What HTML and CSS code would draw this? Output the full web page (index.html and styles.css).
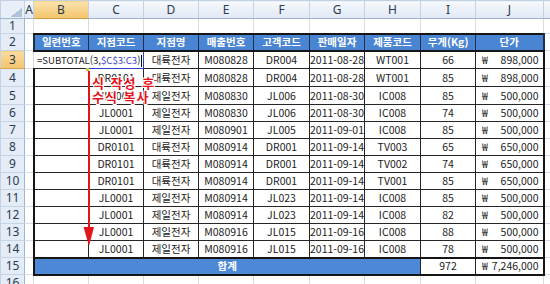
FILE: index.html
```html
<!DOCTYPE html>
<html lang="ko">
<head>
<meta charset="utf-8">
<link rel="stylesheet" href="styles.css">
</head>
<body>
<div class="sheet">
<table class="grid">
<colgroup>
<col class="w24"><col class="w9"><col class="w55"><col class="w55"><col class="w55"><col class="w55"><col class="w56"><col class="w55"><col class="w56"><col class="w55"><col class="w68"><col class="w7">
</colgroup>
<thead>
<tr class="colhead h18"><th class="corner"></th><th>A</th><th class="sel">B</th><th>C</th><th>D</th><th>E</th><th>F</th><th>G</th><th>H</th><th>I</th><th>J</th><th></th></tr>
</thead>
<tbody>
<tr class="h15"><th class="rh">1</th><td></td><td></td><td></td><td></td><td></td><td></td><td></td><td></td><td></td><td></td><td></td></tr>
<tr class="h17 hdr"><th class="rh">2</th><td></td><td class="t tl">일련번호</td><td class="t">지점코드</td><td class="t">지점명</td><td class="t">매출번호</td><td class="t">고객코드</td><td class="t">판매일자</td><td class="t">제품코드</td><td class="t">무게(Kg)</td><td class="t tr">단가</td><td></td></tr>
<tr class="h18"><th class="rh sel">3</th><td></td><td class="edit">=SUBTOTAL(3,<span class="ref">$C$3:C3</span>)<span class="caret"></span></td><td class="t refbox"></td><td class="t">대륙전자</td><td class="t">M080828</td><td class="t">DR004</td><td class="t">2011-08-28</td><td class="t">WT001</td><td class="t">66</td><td class="t tr"><div class="acct"><span>₩</span><span>898,000</span></div></td><td></td></tr>
<tr class="h18"><th class="rh">4</th><td></td><td class="t tl"></td><td class="t">DR0101</td><td class="t">대륙전자</td><td class="t">M080828</td><td class="t">DR004</td><td class="t">2011-08-28</td><td class="t">WT001</td><td class="t">85</td><td class="t tr"><div class="acct"><span>₩</span><span>898,000</span></div></td><td></td></tr>
<tr class="h18"><th class="rh">5</th><td></td><td class="t tl"></td><td class="t">JL0001</td><td class="t">제일전자</td><td class="t">M080830</td><td class="t">JL006</td><td class="t">2011-08-30</td><td class="t">IC008</td><td class="t">85</td><td class="t tr"><div class="acct"><span>₩</span><span>500,000</span></div></td><td></td></tr>
<tr class="h17"><th class="rh">6</th><td></td><td class="t tl"></td><td class="t">JL0001</td><td class="t">제일전자</td><td class="t">M080830</td><td class="t">JL006</td><td class="t">2011-08-30</td><td class="t">IC008</td><td class="t">74</td><td class="t tr"><div class="acct"><span>₩</span><span>500,000</span></div></td><td></td></tr>
<tr class="h17"><th class="rh">7</th><td></td><td class="t tl"></td><td class="t">JL0001</td><td class="t">제일전자</td><td class="t">M080901</td><td class="t">JL005</td><td class="t">2011-09-01</td><td class="t">IC008</td><td class="t">85</td><td class="t tr"><div class="acct"><span>₩</span><span>500,000</span></div></td><td></td></tr>
<tr class="h17"><th class="rh">8</th><td></td><td class="t tl"></td><td class="t">DR0101</td><td class="t">대륙전자</td><td class="t">M080914</td><td class="t">DR001</td><td class="t">2011-09-14</td><td class="t">TV003</td><td class="t">65</td><td class="t tr"><div class="acct"><span>₩</span><span>650,000</span></div></td><td></td></tr>
<tr class="h17"><th class="rh">9</th><td></td><td class="t tl"></td><td class="t">DR0101</td><td class="t">대륙전자</td><td class="t">M080914</td><td class="t">DR001</td><td class="t">2011-09-14</td><td class="t">TV002</td><td class="t">74</td><td class="t tr"><div class="acct"><span>₩</span><span>650,000</span></div></td><td></td></tr>
<tr class="h17"><th class="rh">10</th><td></td><td class="t tl"></td><td class="t">DR0101</td><td class="t">대륙전자</td><td class="t">M080914</td><td class="t">DR001</td><td class="t">2011-09-14</td><td class="t">TV001</td><td class="t">85</td><td class="t tr"><div class="acct"><span>₩</span><span>650,000</span></div></td><td></td></tr>
<tr class="h17"><th class="rh">11</th><td></td><td class="t tl"></td><td class="t">JL0001</td><td class="t">제일전자</td><td class="t">M080914</td><td class="t">JL023</td><td class="t">2011-09-14</td><td class="t">IC008</td><td class="t">85</td><td class="t tr"><div class="acct"><span>₩</span><span>500,000</span></div></td><td></td></tr>
<tr class="h17"><th class="rh">12</th><td></td><td class="t tl"></td><td class="t">JL0001</td><td class="t">제일전자</td><td class="t">M080914</td><td class="t">JL023</td><td class="t">2011-09-14</td><td class="t">IC008</td><td class="t">82</td><td class="t tr"><div class="acct"><span>₩</span><span>500,000</span></div></td><td></td></tr>
<tr class="h17"><th class="rh">13</th><td></td><td class="t tl"></td><td class="t">JL0001</td><td class="t">제일전자</td><td class="t">M080916</td><td class="t">JL015</td><td class="t">2011-09-16</td><td class="t">IC008</td><td class="t">88</td><td class="t tr"><div class="acct"><span>₩</span><span>500,000</span></div></td><td></td></tr>
<tr class="h17"><th class="rh">14</th><td></td><td class="t tl"></td><td class="t">JL0001</td><td class="t">제일전자</td><td class="t">M080916</td><td class="t">JL015</td><td class="t">2011-09-16</td><td class="t">IC008</td><td class="t">78</td><td class="t tr"><div class="acct"><span>₩</span><span>500,000</span></div></td><td></td></tr>
<tr class="h17 tot"><th class="rh">15</th><td></td><td class="t tl sum" colspan="7">합계</td><td class="t">972</td><td class="t tr"><div class="acct"><span>₩</span><span>7,246,000</span></div></td><td></td></tr>
<tr class="h17"><th class="rh">16</th><td></td><td></td><td></td><td></td><td></td><td></td><td></td><td></td><td></td><td></td><td></td></tr>
</tbody>
</table>
<svg class="arrow" width="550" height="284" viewBox="0 0 550 284">
<rect x="86" y="68" width="3" height="3" fill="#c9c83a"/>
<rect x="88" y="71" width="2" height="160" fill="#e3141b"/>
<polygon points="83.5,227 94,227 89,246" fill="#e3141b"/>
</svg>
<div class="note"><div>식 작성 후</div><div>수식 복사</div></div>
</div>
</body>
</html>
```

FILE: styles.css
```css
* { box-sizing: border-box; }
html, body { margin: 0; padding: 0; background: #fff; }
body { width: 550px; height: 284px; overflow: hidden; font-family: "Noto Sans CJK KR", "Noto Sans", sans-serif; }

.sheet { position: relative; width: 550px; height: 284px; overflow: hidden; }

.grid { border-collapse: collapse; table-layout: fixed; width: 550px; font-size: 10.5px; line-height: 14px; color: #1c1c1c; }
.grid td, .grid th { padding: 0; border: 1px solid #d5dbe6; white-space: nowrap; overflow: hidden; text-align: center; vertical-align: middle; font-weight: normal; }

.w24 { width: 24px; }
.w9 { width: 9px; }
.w55 { width: 55px; }
.w56 { width: 56px; }
.w68 { width: 68px; }
.w7 { width: 7px; }

.h18 { height: 18px; }
.h17 { height: 17px; }
.h15 { height: 15px; }

.colhead th { background: linear-gradient(#f6f9fd, #dfe8f4); border-color: #c4d1e2; border-bottom: 1px solid #9eb6ce; color: #2b3a4e; font-family: "Noto Sans", sans-serif; font-size: 12px; }
.colhead th.sel { background: linear-gradient(#fbe3ae, #f3c36a); border-bottom-color: #cf9d45; }
.colhead th.corner { background: #e9eff8 linear-gradient(to bottom right, transparent 50%, #aec2da 50%) no-repeat right 2px bottom 1px / 12px 9px; }

.grid th.rh { background: #e4ecf7; border-color: #c5d3e5; border-right: 1px solid #9eb6ce; color: #2b3a4e; font-family: "Noto Sans", sans-serif; font-size: 12px; }
.grid th.rh.sel { background: linear-gradient(#fadca2, #f3c46b); border-bottom-color: #d9a650; }

.grid td.t { border: 1px solid #262626; }
.grid td.tl { border-left: 2px solid #151515; }
.grid td.tr { border-right: 2px solid #151515; }

.hdr td.t { background: #4a85d3; color: #fff; font-weight: 700; border-top: 2px solid #151515; border-bottom: 2px solid #151515; border-left-color: #1d2f4c; border-right-color: #1d2f4c; }

.tot td.t { border-top: 2px solid #151515; border-bottom: 2px solid #151515; }
.tot td.sum { background: #4c88d6; color: #fff; font-weight: 700; }

.grid td.edit { overflow: visible; text-align: left; padding-left: 3px; font-size: 9.6px; border-left: 1px solid #d5dbe6; border-right: hidden; border-bottom: 1px solid #262626; position: relative; z-index: 1; }
.ref { color: #3a3fce; }
.caret { display: inline-block; width: 1px; height: 12px; background: #111; vertical-align: middle; margin-left: 1px; }
.grid td.refbox { border: 1px solid #3041d0; }

.acct { display: flex; justify-content: space-between; padding: 0 4px 0 6px; }

.arrow { position: absolute; left: 0; top: 0; pointer-events: none; }

.note { position: absolute; left: 92px; top: 76px; color: #e5141c; font-weight: 700; font-size: 13px; line-height: 14px; letter-spacing: 1px; word-spacing: 1px; text-shadow: 1px 0 0 #fff, -1px 0 0 #fff, 0 1px 0 #fff, 0 -1px 0 #fff, 1px 1px 0 #fff, -1px -1px 0 #fff, 1px -1px 0 #fff, -1px 1px 0 #fff; }
```
